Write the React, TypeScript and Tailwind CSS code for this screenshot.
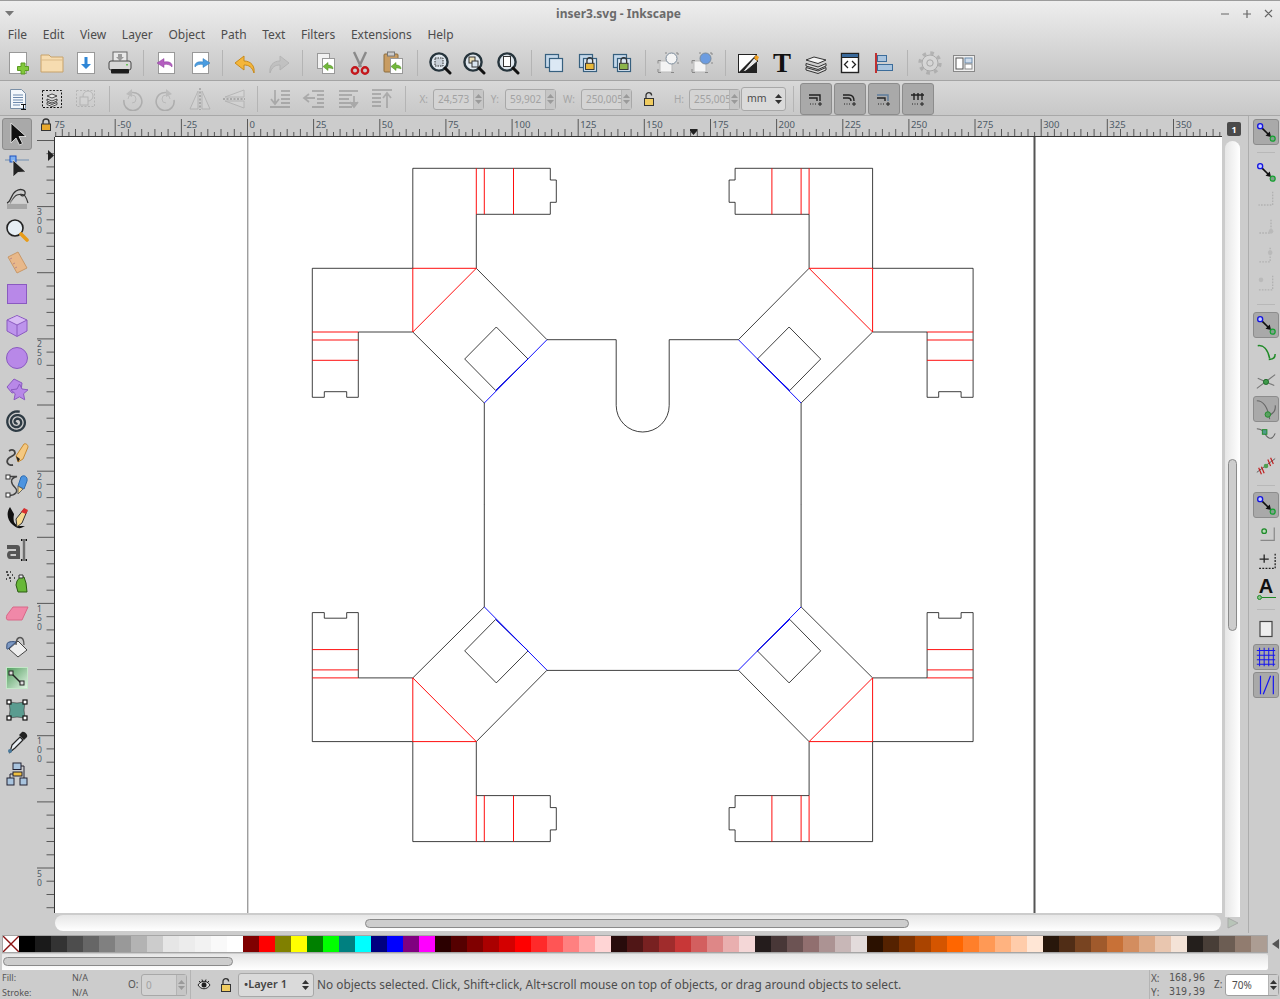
import type { ReactNode } from "react";

const ui = "font-['Noto_Sans','Open_Sans',sans-serif]";

// ---------- small shared bits ----------
function I({ children, s = 24, dim = false }: { children: ReactNode; s?: number; dim?: boolean }) {
  return (
    <svg width={s} height={s} viewBox="0 0 24 24" className={dim ? "opacity-30 grayscale" : ""}>
      {children}
    </svg>
  );
}

function Btn({ children }: { children: ReactNode }) {
  return <div className="flex h-[32px] w-[34px] shrink-0 items-center justify-center">{children}</div>;
}

function Sep({ w = "w-[12px]" }: { w?: string }) {
  return (
    <div className={`flex h-[26px] shrink-0 justify-center ${w}`}>
      <div className="h-full w-px bg-[#b4b4b4]" />
    </div>
  );
}

function UpDown({ c = "#9a9a9a" }: { c?: string }) {
  return (
    <svg width="9" height="14" viewBox="0 0 9 14">
      <path d="M4.500 2 8 6H1zM4.500 12 1 8h7z" fill={c} />
    </svg>
  );
}

function Spin({ v }: { v: string }) {
  return (
    <div className="flex h-[21px] w-[51px] shrink-0 rounded-[3px] border border-[#a8a8a8] bg-[#d4d4d4]">
      <span className="w-[39px] overflow-hidden whitespace-nowrap pl-[4px] text-[10px] leading-[19px] text-[#a2a2a2]">{v}</span>
      <span className="flex flex-1 items-center justify-center border-l border-[#b4b4b4] bg-[#c6c6c6]">
        <UpDown />
      </span>
    </div>
  );
}

function Lbl({ t, w, pr }: { t: string; w: string; pr: string }) {
  return <span className={`shrink-0 text-right text-[10px] text-[#a6a6a6] ${w} ${pr}`}>{t}</span>;
}

// ---------- main toolbar icons ----------
const Doc = ({ x = 5, y = 2, w = 15, h = 20, f = "#fff" }: { x?: number; y?: number; w?: number; h?: number; f?: string }) => (
  <rect x={x + 0.5} y={y + 0.5} width={w} height={h} fill={f} stroke="#999" />
);

const Lens = ({ children }: { children?: ReactNode }) => (
  <I>
    <circle cx="11" cy="11" r="8.600" fill="#dfe7ee" stroke="#26343c" strokeWidth="2.400" />
    {children}
    <path d="M17 17l5 5" stroke="#111" strokeWidth="3" strokeLinecap="round" />
  </I>
);

const Padlock = ({ c = "#e8b83a" }: { c?: string }) => (
  <g>
    <path d="M11 14v-3a3 3 0 0 1 6 0v3" fill="none" stroke="#333" strokeWidth="1.400" />
    <rect x="9.500" y="14" width="9" height="6.500" fill={c} stroke="#333" />
  </g>
);

const NewIco = () => (
  <I>
    <Doc x={3} y={1} w={17} h={21} />
    <path d="M15 12h4v3.500h3.500v4H19V23h-4v-3.500h-3.500v-4H15z" fill="#82c83c" stroke="#5b9a22" />
  </I>
);
const OpenIco = () => (
  <I>
    <path d="M1 4h8l2 2h12v15H1z" fill="#f6dcb0" stroke="#c7a26a" />
    <path d="M1 9h22" stroke="#d9b988" />
  </I>
);
const SaveIco = () => (
  <I>
    <Doc x={3} y={1} w={17} h={21} />
    <path d="M10.500 6h3v7h3.500l-5 5-5-5h3.500z" fill="#2f86d6" />
  </I>
);
const PrintIco = () => (
  <I>
    <rect x="5" y="1" width="14" height="11" fill="#e8e8e8" stroke="#666" />
    <path d="M10 3h4v3h2l-4 4-4-4h2z" fill="#9a9a9a" />
    <rect x="1" y="10" width="22" height="9" rx="2" fill="#d8d8d8" stroke="#444" />
    <rect x="3" y="18" width="18" height="4.500" rx="1" fill="#1d1d1d" />
    <rect x="18" y="13" width="2" height="1.500" fill="#6ac25a" />
  </I>
);
const ImportIco = () => (
  <I>
    <Doc x={4} y={1} w={16} h={21} />
    <path d="M18 16c1-4-3-6-8-5V7.500L3 12l7 4.500V13.500c3-.5 6 0 8 2.500z" fill="#b45ec0" stroke="#8a3c98" strokeWidth=".5" />
  </I>
);
const ExportIco = () => (
  <I>
    <Doc x={4} y={1} w={16} h={21} />
    <path d="M7 16c-1-4 3-6 8-5V7.500L22 12l-7 4.500V13.500c-3-.5-6 0-8 2.500z" fill="#4a9ce0" stroke="#2f78b8" strokeWidth=".5" />
  </I>
);
const UndoIco = () => (
  <I>
    <path d="M21 22c1-7-3-12-10-12V5L2 12l9 7v-5c5 0 8 2 10 8z" fill="#f4b63a" stroke="#c88a1c" />
  </I>
);
const RedoIco = () => (
  <I dim>
    <path d="M3 22c-1-7 3-12 10-12V5l9 7-9 7v-5c-5 0-8 2-10 8z" fill="#9aa89a" stroke="#777" />
  </I>
);
const GreenArrow = () => (
  <path d="M19 18c0-3-2-4-5-4v-2.500L9 15.500l5 4V17c2 0 4 0 5 1z" fill="#72b83c" stroke="#4f8a22" strokeWidth=".5" />
);
const CopyIco = () => (
  <I>
    <Doc x={3} y={2} w={12} h={15} f="#f2f2f2" />
    <Doc x={8} y={7} w={12} h={15} />
    <GreenArrow />
  </I>
);
const CutIco = () => (
  <I>
    <path d="M6 1l7 15M18 1l-7 15" stroke="#8a8a8a" strokeWidth="2.400" />
    <circle cx="7" cy="19.500" r="3.200" fill="none" stroke="#c4171c" strokeWidth="2.400" />
    <circle cx="17" cy="19.500" r="3.200" fill="none" stroke="#c4171c" strokeWidth="2.400" />
  </I>
);
const PasteIco = () => (
  <I>
    <rect x="2" y="3" width="14" height="18" rx="1" fill="#c89c62" stroke="#8c6c3c" />
    <rect x="5.500" y="1" width="7" height="4" fill="#ccc" stroke="#777" />
    <Doc x={8} y={7} w={12} h={15} />
    <GreenArrow />
  </I>
);
const DupIco = () => (
  <I>
    <rect x="3.500" y="3.500" width="13" height="13" fill="#c4d8ea" stroke="#37607f" strokeWidth="1.200" />
    <rect x="7.500" y="7.500" width="13" height="13" fill="#dce8f4" stroke="#37607f" strokeWidth="1.200" />
  </I>
);
const CloneIco = ({ c }: { c: string }) => (
  <I>
    <rect x="3.500" y="3.500" width="13" height="13" fill="#c4d8ea" stroke="#37607f" strokeWidth="1.200" />
    <rect x="7.500" y="7.500" width="13" height="13" fill="#dce8f4" stroke="#37607f" strokeWidth="1.200" />
    <g transform="translate(.5 -1) scale(.95)">
      <Padlock c={c} />
    </g>
  </I>
);
const GroupIco = ({ c }: { c: string }) => (
  <I>
    <rect x="4" y="10" width="12" height="11" fill="#f4f4f4" stroke="#bbb" />
    <path d="M2 9.500h3M15 21.500h3M2 21.500h3M2 9.500v3M2 18v3" stroke="#888" />
    <circle cx="15.500" cy="7.500" r="5.500" fill={c} stroke="#7a8a9a" />
    <path d="M9 2h2M20 2h2M22 2v2M22 11v2" stroke="#888" />
  </I>
);
const FillIco = () => (
  <I>
    <rect x="2" y="3" width="19" height="19" fill="#222" />
    <path d="M3 21V4h17z" fill="#fff" />
    <path d="M8 19l10-12 4 3-12 10-3 1z" fill="#e8e8e8" stroke="#222" />
    <path d="M18 7l2-3 3 2-2 4z" fill="#f0a020" />
  </I>
);
const TextIco = () => <span className="font-['Liberation_Serif',serif] text-[27px] font-bold leading-[24px] text-[#111]">T</span>;
const LayersIco = () => (
  <I>
    <path d="M2 9l8-3 12 3-8 3.500z" fill="#f4f4f4" stroke="#333" />
    <path d="M2 12.500l12 3.500 8-3.500v2.500l-8 3.500-12-3.500zM2 16.500l12 3.500 8-3.500v2.500l-8 3.500-12-3.500z" fill="#ddd" stroke="#333" />
  </I>
);
const XmlIco = () => (
  <I>
    <rect x="3.500" y="2.500" width="17" height="19" fill="#fff" stroke="#222" strokeWidth="1.400" />
    <rect x="3.500" y="2.500" width="17" height="4" fill="#3a6a9c" stroke="#222" />
    <path d="M10 10l-3.500 3.500L10 17M14 10l3.500 3.500L14 17" fill="none" stroke="#222" strokeWidth="1.300" />
  </I>
);
const AlignIco = () => (
  <I>
    <path d="M4 2v20" stroke="#c03030" strokeWidth="2" />
    <rect x="5.500" y="4.500" width="9" height="6" fill="#a9c4de" stroke="#3b6c9a" />
    <rect x="5.500" y="13.500" width="15" height="6" fill="#a9c4de" stroke="#3b6c9a" />
  </I>
);
const GearIco = () => (
  <I>
    <g opacity=".55">
      <circle cx="12" cy="12" r="8" fill="#dcdcdc" stroke="#888" strokeWidth="1" />
      <circle cx="12" cy="12" r="10" fill="none" stroke="#999" strokeWidth="3.400" strokeDasharray="3.600 4.250" />
      <circle cx="12" cy="12" r="3.200" fill="#ddd" stroke="#888" />
    </g>
  </I>
);
const DocPropIco = () => (
  <I>
    <rect x="1.500" y="4.500" width="21" height="16" fill="#eee" stroke="#888" />
    <rect x="4" y="7" width="7" height="11" fill="#fff" stroke="#555" />
    <rect x="13" y="7" width="7" height="5" fill="#cfdceb" stroke="#6a8aaa" />
    <rect x="13" y="13" width="7" height="5" fill="#fff" stroke="#888" />
  </I>
);

// ---------- second toolbar ----------
const DocPage = () => (
  <I>
    <path d="M4.500 2.500h11l4 4v15h-15z" fill="#f4f8fc" stroke="#7a8fa6" />
    <path d="M7 8h10M7 10.500h10M7 13h10M7 15.500h10M7 18h7" stroke="#6d89ad" />
    <path d="M15 17.500h5M15 22.500h5M17.500 17.500v5" stroke="#111" strokeWidth="1" />
  </I>
);
const SelAll = () => (
  <I>
    <rect x="2.500" y="3.500" width="19" height="17" fill="#d4d4d4" stroke="#111" strokeDasharray="2 1.500" />
    <path d="M7 9l5-2 5 2-5 2zM7 12l5 2 5-2v2l-5 2-5-2zM7 15.500l5 2 5-2v2l-5 2-5-2z" fill="#eee" stroke="#222" strokeWidth=".8" />
  </I>
);
const SelIn = () => (
  <I dim>
    <rect x="2.500" y="3.500" width="18" height="16" fill="none" stroke="#777" strokeDasharray="2 1.500" />
    <circle cx="14" cy="9" r="5" fill="#ddd" stroke="#777" />
    <rect x="6" y="10" width="8" height="8" fill="#ddd" stroke="#777" />
  </I>
);
const RotL = () => (
  <I dim>
    <path d="M8 7a9 9 0 1 1-4 6" fill="none" stroke="#666" strokeWidth="1.600" />
    <path d="M12 2l-6 5 6 3z" fill="#888" />
    <path d="M12 16a4 4 0 1 0-4-4" fill="none" stroke="#888" />
  </I>
);
const RotR = () => (
  <I dim>
    <path d="M16 7a9 9 0 1 0 4 6" fill="none" stroke="#666" strokeWidth="1.600" />
    <path d="M12 2l6 5-6 3z" fill="#888" />
    <path d="M12 16a4 4 0 1 1 4-4" fill="none" stroke="#888" />
  </I>
);
const FlipH = () => (
  <I dim>
    <path d="M10 4L2 22h8zM14 4l8 18h-8z" fill="#ddd" stroke="#777" />
    <path d="M12 1v22" stroke="#555" strokeDasharray="2 1.500" strokeWidth="2" />
  </I>
);
const FlipV = () => (
  <I dim>
    <path d="M22 3L3 10h19zM22 21L3 14h19z" fill="#ddd" stroke="#777" />
    <path d="M1 12h22" stroke="#555" strokeDasharray="2 1.500" strokeWidth="2" />
  </I>
);
const Stack = ({ d }: { d: string }) => (
  <I dim>
    <path d={d} fill="none" stroke="#555" strokeWidth="1.800" />
  </I>
);

// ---------- snap-mode toolbars etc. ----------
const TogIco = ({ i }: { i: number }) => (
  <svg width="18" height="18" viewBox="0 0 18 18">
    <g fill="none" stroke="#222" strokeWidth="1.400">
      {i === 0 && <path d="M2 5h11v6M2 8h8v3" />}
      {i === 1 && <path d="M2 5h6c3 0 5 2 5 6M2 8h5c2 0 3 1 3 3" />}
      {i === 2 && <path d="M2 5h11v6" stroke="#5d7c9c" />}
      {i === 2 && <path d="M2 8h8v3" />}
      {i === 3 && <path d="M2 5h13M5 3v7M9 3v7M13 3v7" />}
    </g>
    <path d="M3 14h1M5.500 14h1M8 14h1M11 14h4M13 12v4" stroke="#222" />
  </svg>
);

const NodeLink = () => (
  <svg width="20" height="20" viewBox="0 0 24 24">
    <path d="M7 7l8 8" stroke="#111" strokeWidth="2" />
    <path d="M18 18l-6.500-1.500 5-5z" fill="#111" />
    <circle cx="5" cy="5" r="3" fill="#c4ccff" stroke="#1414e0" strokeWidth="1.600" />
    <circle cx="20" cy="20" r="3" fill="#7fa08a" stroke="#15a030" strokeWidth="1.500" />
  </svg>
);

function Snap({ children, on = false }: { children?: ReactNode; on?: boolean }) {
  return (
    <div className="flex h-[28px] items-center justify-center">
      <div className={on ? "flex h-[26px] w-[26px] items-center justify-center rounded-[3px] border border-[#8c8c8c] bg-[#a9a9a9]" : "flex h-[26px] w-[26px] items-center justify-center"}>
        {children}
      </div>
    </div>
  );
}
const SnapSep = ({ h }: { h: string }) => (
  <div className={`flex items-center justify-center ${h}`}>
    <div className="h-px w-[18px] bg-[#b8b8b8]" />
  </div>
);

const Dim = ({ d, cx, cy }: { d: string; cx?: number; cy?: number }) => (
  <svg width="20" height="20" viewBox="0 0 24 24" className="opacity-50">
    <path d={d} fill="none" stroke="#999" strokeWidth="1.600" strokeDasharray="2 1.500" />
    {cx !== undefined && <circle cx={cx} cy={cy} r="2.800" fill="#aaa" />}
  </svg>
);

const SmallS = ({ children }: { children: ReactNode }) => (
  <svg width="22" height="22" viewBox="0 0 24 24">
    {children}
  </svg>
);

// spiral tool: points along a growing radius
function spiralPath() {
  let d = "";
  for (let i = 0; i <= 70; i++) {
    const a = (i / 70) * Math.PI * 5.2 + 1.2;
    const r = 1.2 + (i / 70) * 9.6;
    const x = 12 + r * Math.cos(a);
    const y = 12 + r * Math.sin(a);
    d += `${i === 0 ? "M" : "L"}${x.toFixed(2)} ${y.toFixed(2)}`;
  }
  return d;
}

// ---------- toolbox ----------
const tools: ReactNode[] = [
  <I key="sel"><path d="M6 1v20l5-5 3.500 7 3-1.500-3.500-7h7z" fill="#111" stroke="#eee" strokeWidth=".8" /></I>,
  <I key="node"><path d="M0 6h24" stroke="#8aa0b8" strokeWidth="1.400" /><rect x="5" y="2" width="6" height="6" fill="#7fb0f0" stroke="#1a50c0" /><path d="M8 6v17l5-4.500 8-.5z" fill="#222" stroke="#ddd" strokeWidth=".8" /></I>,
  <I key="tweak"><path d="M2 17c4-1 4-9 9-12s10-1 9 3c-1 3-5 2-4 0" fill="none" stroke="#333" strokeWidth="1.300" /><path d="M5 17c2-2 4-7 7-8s6-2 8 1 3 7 3 7" fill="none" stroke="#333" strokeWidth="1.100" /><path d="M2 23v-5h20v5z" fill="#a6a6a6" /><path d="M3 17c3-1 6-6 9-7s6 0 9 7z" fill="#d4d4d4" opacity=".6" /></I>,
  <I key="zoom"><circle cx="10" cy="10" r="8" fill="#e6eef4" stroke="#222" strokeWidth="1.600" /><path d="M16 16l6 6" stroke="#e89c18" strokeWidth="3.600" strokeLinecap="round" /></I>,
  <I key="meas"><path d="M3 7l10-5 9 16-10 5z" fill="#e8b88a" stroke="#c89868" /><path d="M5 9l2-1M8 14l2-1M10 18l2-1" stroke="#b88" /></I>,
  <I key="rect"><rect x="2.500" y="2.500" width="19" height="19" fill="#b888e8" stroke="#8a5ac0" /></I>,
  <I key="box"><path d="M12 1.500l10 4.500v11l-10 5.500-10-5.500V6z" fill="#bd94ec" stroke="#8a5ac0" /><path d="M2.500 6.500L12 2l9.500 4.500L12 11z" fill="#d8bcf4" /><path d="M2 6l10 5 10-5M12 11v11" fill="none" stroke="#8a5ac0" /></I>,
  <I key="circ"><circle cx="12" cy="12" r="10.500" fill="#b888e8" stroke="#8a5ac0" /></I>,
  <I key="star"><path d="M9 1l8 4 -1 8-9 2-5-6z" fill="#b888e8" stroke="#8a5ac0" /><path d="M14.500 6l2.500 5 6 .8-4.500 4 1.200 6-5.200-3-5.500 3 1.200-6L6 11.800l6-.8z" fill="#b888e8" stroke="#8a5ac0" /></I>,
  <I key="spiral"><path d={spiralPath()} fill="none" stroke="#2e3b44" strokeWidth="2.300" /></I>,
  <I key="pencil"><path d="M13 20l-2-6 8-12c2-1 4 1 4 3l-5 12z" fill="#f4c880" stroke="#c88a30" /><path d="M13 20l-2-6 4 3z" fill="#222" /><path d="M8 23c-5 1-7-3-5-6s7-3 7-6-3-4-6-2" fill="none" stroke="#444" strokeWidth="1.800" /></I>,
  <I key="pen"><path d="M3 2.500h9c-8 2-6 7-2 11s0 8-6 8" fill="none" stroke="#444" strokeWidth="1.400" /><rect x="1" y="1" width="4" height="4" fill="#fff" stroke="#333" /><rect x="1" y="19" width="4" height="4" fill="#fff" stroke="#333" /><path d="M16 3c3-3 7 0 6 4l-3 8-6-3z" fill="#4c94e0" stroke="#2a6ab0" /><path d="M13 12l5 3-5 5z" fill="#f4d890" stroke="#666" /></I>,
  <I key="calli"><path d="M5 1c-4 6-3 13 3 18s8 3 12 1c-4 0-8 1-11-4-1-4 0-7 0-8z" fill="#111" /><path d="M11 13l8-10 3 2-5 12-5 4z" fill="#f4d890" stroke="#333" /><path d="M16 6l3-4 4 2-2 4z" fill="#d83030" /></I>,
  <I key="text"><path d="M2 7h10c2 0 3 1 3 3v11H5c-2 0-3-2-3-4s1-4 3-4h6v-2H2zM5.500 16v2h5.500v-2z" fill="#555" /><path d="M16 2h6M19 2v20M16 22h6" fill="none" stroke="#111" strokeWidth="2.200" /><path d="M17 2h4M19 3v18M17 22h4" fill="none" stroke="#fff" strokeWidth=".8" /></I>,
  <I key="spray"><path d="M12 11l3-4h4l2 6 1 9h-9l-2-7z" fill="#68b838" stroke="#2a5a12" /><path d="M14 5h4v3h-4z" fill="#eee" stroke="#333" /><path d="M1 2h2M5 2h1M2 5h2M7 5h1M4 8h2M9 8h1M1 9h1M5 11h1" stroke="#222" strokeWidth="1.500" /></I>,
  <I key="eraser"><path d="M8 5h15l-6 13H3C1 18 1 15 2 13z" fill="#f088a8" stroke="#d86888" /></I>,
  <I key="bucket"><path d="M13 7l9 9-9 7-9-8z" fill="#eee" stroke="#444" /><path d="M11 11c0-10 8-10 8 0" fill="none" stroke="#555" strokeWidth="1.300" /><path d="M2 10c0-2 5-3 9-2L3 15c-2 1-1-3-1-5z" fill="#7e9ac4" stroke="#35507c" /></I>,
  <I key="grad"><defs><linearGradient id="gr" x1="0" y1="0" x2="1" y2="1"><stop offset="0" stopColor="#4f9c5c" /><stop offset="1" stopColor="#e4f4e6" /></linearGradient></defs><rect x="1.500" y="1.500" width="21" height="21" fill="url(#gr)" stroke="#c4e8c8" /><path d="M7 8l9 9" stroke="#222" strokeWidth="1.400" /><rect x="4" y="5" width="4" height="4" fill="#ddd" stroke="#222" /><rect x="15" y="15" width="4" height="4" fill="#ddd" stroke="#222" /></I>,
  <I key="mesh"><path d="M4 4q8 2 16 0-2 8 0 16-8-2-16 0 2-8 0-16z" fill="#5a9c90" stroke="#333" strokeWidth=".6" /><g fill="#fff" stroke="#111" strokeWidth="1.200"><rect x="2" y="2" width="4" height="4" /><rect x="18" y="2" width="4" height="4" /><rect x="2" y="18" width="4" height="4" /><rect x="18" y="18" width="4" height="4" /></g></I>,
  <I key="drop"><path d="M7 15l8-8 3 3-8 8-5 4z" fill="#e8eef4" stroke="#222" strokeWidth="1.200" /><path d="M14 5l5 5 3-3c1-2-2-6-5-5z" fill="#222" /><circle cx="5" cy="21" r="2" fill="#4a7a9c" /></I>,
  <I key="conn"><rect x="8" y="1" width="8" height="6.500" fill="#a9c4de" stroke="#223" /><rect x="2" y="16" width="7" height="7" fill="#a9c4de" stroke="#223" /><rect x="15" y="16" width="7" height="7" fill="#a9c4de" stroke="#223" /><rect x="8" y="10" width="9" height="4" fill="#f0c040" stroke="#223" /><path d="M5 16v-4h3M16 4h3v12" fill="none" stroke="#223" /></I>,
];

// ---------- palette ----------
const palette = "000000 1a1a1a 333333 4d4d4d 666666 808080 999999 b3b3b3 cccccc e6e6e6 ececec f2f2f2 f9f9f9 ffffff 800000 ff0000 808000 ffff00 008000 00ff00 008080 00ffff 000080 0000ff 800080 ff00ff 2b0000 550000 800000 aa0000 d40000 ff0000 ff2a2a ff5555 ff8080 ffaaaa ffd5d5 280b0b 501616 782121 a02c2c c83737 d35f5f de8787 e9afaf f4d7d7 241c1c 483737 6c5353 916f6f ac9393 c8b7b7 e3dbdb 2b1100 552200 803300 aa4400 d45500 ff6600 ff7f2a ff9955 ffb380 ffccaa ffe6d5 28170b 502d16 784421 a05a2c c87137 d38d5f deaa87 e9c6af f4e3d7 241f1c 483e37 6c5d53 917c6f ac9d93".split(" ");

// ---------- rulers ----------
function HRuler() {
  const ticks = [];
  for (let k = -30; k <= 148; k++) {
    const x = 248 + k * 6.614 - 0.5;
    const top = k % 10 === 0 ? 119 : k % 2 === 0 ? 129 : 132;
    ticks.push(<path key={k} d={`M${x.toFixed(1)} ${top}V136`} stroke="#3a3a3a" strokeWidth=".8" />);
  }
  const labels = [];
  for (let v = -75; v <= 350; v += 25) {
    labels.push(
      <text key={v} x={248 + (v / 25) * 66.14 + 1.5} y="128" fontSize="9.500" fill="#4d5a66" fontFamily="Noto Sans, sans-serif">
        {v}
      </text>,
    );
  }
  return (
    <svg width="1167" height="19" viewBox="55 118 1167 19" className="block">
      {ticks}
      {labels}
      <path d="M55 136.500H1222" stroke="#333" />
      <path d="M690 129h7v2l-3.500 4-3.500-4z" fill="#222" />
    </svg>
  );
}

function VRuler() {
  const ticks = [];
  for (let k = -55; k <= 5; k++) {
    const y = 868 + k * 13.228;
    const major = k % 5 === 0;
    ticks.push(<path key={k} d={`M${major ? 37 : 46.500} ${y.toFixed(1)}H54`} stroke="#3a3a3a" strokeWidth=".8" />);
  }
  const labels: ReactNode[] = [];
  for (const v of [300, 250, 200, 150, 100, 50]) {
    const y = 868 + ((50 - v) / 25) * 66.14;
    String(v).split("").forEach((d, i) => {
      labels.push(
        <text key={`${v}-${i}`} x="39.500" y={y + 8.500 + i * 9} textAnchor="middle" fontSize="8.500" fill="#4d5a66" fontFamily="Noto Sans, sans-serif">
          {d}
        </text>,
      );
    });
  }
  return (
    <svg width="18" height="776" viewBox="37 137 18 776" className="block">
      {ticks}
      {labels}
      <path d="M54.500 137V913" stroke="#333" />
      <path d="M48 150l6 5.500-6 5.500z" fill="#222" />
    </svg>
  );
}

// ---------- the drawing on the canvas ----------
function Quarter() {
  return (
    <g fill="none" strokeWidth=".75">
      <path
        stroke="#000"
        d="M476.300 268.300V214.300H550.300V202.300H556.300V180H550.300V168.300H412.800V268.300H312.300V397.300H324.300V391.700H346.700V397.300H358.300V332H412.800L484.300 403V505M476.300 268.300L547 339.700"
      />
      <path stroke="#000" d="M496.300 327L528 359 495.700 390.500 464.700 359z" />
      <path stroke="#f00" strokeWidth=".95" d="M476.300 168.300V214.300M484.300 168.300V214.300M513.500 168.300V214.300M312.300 332H358.300M312.300 340H358.300M312.300 360.300H358.300M412.800 268.300H476.300M412.800 268.300V332M476.300 268.300L412.800 332" />
      <path stroke="#00f" strokeWidth=".95" d="M547 339.700L484.300 403M528 359L495.700 390.500" />
    </g>
  );
}

function Drawing() {
  return (
    <svg width="1167" height="776" viewBox="55 137 1167 776" className="block bg-white">
      <path d="M247.800 137V913" stroke="#666" strokeWidth=".9" />
      <path d="M1034.500 137V913" stroke="#555" strokeWidth="2" />
      <Quarter />
      <g transform="translate(1285.400 0) scale(-1 1)">
        <Quarter />
      </g>
      <g transform="translate(0 1009.900) scale(1 -1)">
        <Quarter />
      </g>
      <g transform="translate(1285.400 1009.900) scale(-1 -1)">
        <Quarter />
      </g>
      {/* the top edge has the slot in it, the bottom one is straight */}
      <path d="M547 339.700H616.200V405.500A26.500 26.500 0 0 0 669.200 405.500V339.700H738.400" stroke="#000" strokeWidth=".75" fill="none" />
      <path d="M547 670.400H738.400" stroke="#000" strokeWidth=".75" fill="none" />
    </svg>
  );
}

const menus = ["File", "Edit", "View", "Layer", "Object", "Path", "Text", "Filters", "Extensions", "Help"];

export default function App() {
  return (
    <div className={`flex h-[999px] w-[1280px] flex-col overflow-hidden bg-[#cccccc] text-[#4c4c4c] ${ui}`}>
      {/* title, menu and command bar share one gradient */}
      <div className="h-[81px] shrink-0 border-t border-b border-t-[#9c9c9c] border-b-[#a4a4a4] bg-linear-to-b from-[#eeeeee] to-[#c6c6c6]">
        <div className="flex h-[23px] items-center justify-between pl-[5px] pr-[7px] pt-[2px]">
          <svg width="11" height="6" viewBox="0 0 11 6">
            <path d="M0 0h9L4.500 5z" fill="#777" />
          </svg>
          <span className="text-[12px] font-bold text-[#6b6b6b]">inser3.svg - Inkscape</span>
          <svg width="52" height="10" viewBox="0 0 52 10">
            <path d="M0 5h8M22 5h8M26 1v8M44 1l7 7M51 1l-7 7" stroke="#666" strokeWidth="1.200" />
          </svg>
        </div>
        <div className="flex h-[22px] items-center text-[12px]">
          {menus.map((m) => (
            <span key={m} className="px-[7.850px]">
              {m}
            </span>
          ))}
        </div>
        <div className="flex h-[34px] items-center pl-[1px]">
          <Btn><NewIco /></Btn>
          <Btn><OpenIco /></Btn>
          <Btn><SaveIco /></Btn>
          <Btn><PrintIco /></Btn>
          <Sep />
          <Btn><ImportIco /></Btn>
          <Btn><ExportIco /></Btn>
          <Sep w="w-[11px]" />
          <Btn><UndoIco /></Btn>
          <Btn><RedoIco /></Btn>
          <Sep w="w-[13px]" />
          <Btn><CopyIco /></Btn>
          <Btn><CutIco /></Btn>
          <Btn><PasteIco /></Btn>
          <Sep />
          <Btn><Lens><rect x="7" y="7" width="8" height="8" fill="#c8d0d8" stroke="#333" strokeDasharray="1.500 1" /></Lens></Btn>
          <Btn><Lens><rect x="7" y="6" width="6" height="6" fill="#ece0b8" stroke="#333" /><rect x="10" y="10" width="6" height="6" fill="#d8e4f0" stroke="#333" /></Lens></Btn>
          <Btn><Lens><rect x="7.500" y="5.500" width="7" height="10" fill="#fff" stroke="#333" /></Lens></Btn>
          <Sep />
          <Btn><DupIco /></Btn>
          <Btn><CloneIco c="#e8b83a" /></Btn>
          <Btn><CloneIco c="#8cb44a" /></Btn>
          <Sep />
          <Btn><GroupIco c="#f4f4f4" /></Btn>
          <Btn><GroupIco c="#6c9ce0" /></Btn>
          <Sep />
          <Btn><FillIco /></Btn>
          <Btn><TextIco /></Btn>
          <Btn><LayersIco /></Btn>
          <Btn><XmlIco /></Btn>
          <Btn><AlignIco /></Btn>
          <Sep />
          <Btn><GearIco /></Btn>
          <Btn><DocPropIco /></Btn>
        </div>
      </div>

      {/* selector tool controls */}
      <div className="flex h-[35px] shrink-0 items-center border-b border-[#a8a8a8] bg-linear-to-b from-[#d8d8d8] to-[#c8c8c8] pl-[1px] pt-[2px]">
        <Btn><DocPage /></Btn>
        <Btn><SelAll /></Btn>
        <Btn><SelIn /></Btn>
        <Sep />
        <Btn><RotL /></Btn>
        <Btn><RotR /></Btn>
        <Btn><FlipH /></Btn>
        <Btn><FlipV /></Btn>
        <Sep />
        <Btn><Stack d="M7 3v13M3 12l4 5 4-5M2 20h20M13 4h9M13 8h9M13 12h9M13 16h9" /></Btn>
        <Btn><Stack d="M3 11h10M7 7l-5 4 5 4M10 4h12M15 8h7M15 12h7M15 16h7M10 20h12" /></Btn>
        <Btn><Stack d="M3 4h19M3 8h13M3 12h10M3 16h19M3 20h13M18 9v10M14 15l4 5 4-5" /></Btn>
        <Btn><Stack d="M2 3h20M17 7v14M13 11l4-5 4 5M2 7h9M2 11h9M2 15h9M2 19h9" /></Btn>
        <Sep />
        <Lbl t="X:" w="w-[22px]" pr="pr-[5px]" />
        <Spin v="24,573" />
        <Lbl t="Y:" w="w-[21px]" pr="pr-[6px]" />
        <Spin v="59,902" />
        <Lbl t="W:" w="w-[25px]" pr="pr-[6px]" />
        <Spin v="250,005" />
        <div className="flex w-[34px] shrink-0 justify-center">
          <svg width="12" height="14" viewBox="0 0 12 14">
            <path d="M3 6V3.500a2.800 2.800 0 0 1 5.600 0" fill="none" stroke="#333" strokeWidth="1.300" />
            <rect x="1.500" y="6.500" width="9" height="7" fill="#f0cc60" stroke="#333" />
          </svg>
        </div>
        <Lbl t="H:" w="w-[23px]" pr="pr-[5px]" />
        <Spin v="255,005" />
        <div className="ml-px flex h-[24px] w-[45px] shrink-0 items-center justify-between rounded-[3px] border border-[#a8a8a8] bg-[#dadada] pl-[5px] pr-[2px] text-[10.500px]">
          <span>mm</span>
          <UpDown c="#333" />
        </div>
        <div className="flex w-[14px] shrink-0 justify-center">
          <div className="h-[26px] w-px bg-[#b4b4b4]" />
        </div>
        <div className="flex gap-[2px]">
          {[0, 1, 2, 3].map((i) => (
            <div key={i} className="flex h-[32px] w-[32px] items-center justify-center rounded-[3px] border border-[#8c8c8c] bg-[#a9a9a9]">
              <TogIco i={i} />
            </div>
          ))}
        </div>
      </div>

      {/* toolbox, canvas with rulers and scrollbars, snap bar */}
      <div className="flex h-[817px] shrink-0">
        <div className="flex w-[37px] shrink-0 flex-col pt-[2px]">
          {tools.map((t, i) => (
            <div key={i} className={i === 0 ? "ml-[2px] flex h-[32px] w-[30px] items-center justify-center rounded-[3px] border border-[#8c8c8c] bg-[#a9a9a9]" : "ml-[2px] flex h-[32px] w-[30px] items-center justify-center"}>
              {t}
            </div>
          ))}
        </div>

        <div className="flex w-[1211px] flex-col">
          <div className="flex h-[21px] items-end">
            <div className="flex h-[19px] w-[18px] justify-center pr-[1px]">
              <svg width="12" height="13" viewBox="0 0 12 13">
                <path d="M3 6V4a3 3 0 0 1 6 0v2" fill="none" stroke="#333" strokeWidth="1.400" />
                <rect x="1.500" y="6" width="9" height="6.500" fill="#e8a82c" stroke="#333" />
              </svg>
            </div>
            <HRuler />
            <div className="mb-[1px] ml-[5px] flex h-[14px] w-[14px] items-center justify-center rounded-[2px] bg-[#4a4a4a] text-[9px] font-bold leading-none text-white">1</div>
          </div>
          <div className="flex h-[776px]">
            <VRuler />
            <Drawing />
            <div className="flex w-[26px] pl-[3px] pt-[4px]">
              <div className="flex h-[776px] w-[15px] flex-col rounded-t-full bg-linear-to-r from-[#e6e6e6] to-white pl-[3px] pt-[318px]">
                <div className="h-[172px] w-[9px] rounded-full border border-[#8a8a8a] bg-[#cdcdcd]" />
              </div>
            </div>
          </div>
          <div className="flex h-[20px] items-center">
            <div className="w-[18px]" />
            <div className="flex h-[16px] w-[1166px] items-center rounded-full bg-linear-to-b from-[#e6e6e6] to-white pl-[310px]">
              <div className="h-[9px] w-[544px] rounded-full border border-[#8a8a8a] bg-[#cdcdcd]" />
            </div>
            <svg width="14" height="12" viewBox="0 0 14 12" className="ml-[5px]">
              <path d="M2 1l10 5-10 5z" fill="#b8c4b8" stroke="#a8aaa8" />
            </svg>
          </div>
        </div>

        <div className="flex w-[32px] shrink-0 flex-col border-l border-[#adadad] pl-[3px] pt-[2px]">
          <Snap on><NodeLink /></Snap>
          <SnapSep h="h-[12px]" />
          <Snap><NodeLink /></Snap>
          <Snap><Dim d="M20 2v16H3" /></Snap>
          <Snap><Dim d="M18 2v16H3" cx={18} cy={16} /></Snap>
          <Snap><Dim d="M17 2v17H3" cx={17} cy={8} /></Snap>
          <Snap><Dim d="M20 2v17H3" cx={6} cy={7} /></Snap>
          <SnapSep h="h-[13px]" />
          <Snap on><NodeLink /></Snap>
          <Snap><SmallS><path d="M3 4c6-1 11 4 13 14" fill="none" stroke="#1e8a26" strokeWidth="1.600" /><path d="M22 13c0 4-2 6-7 6" fill="none" stroke="#1e8a26" strokeWidth="1.600" /></SmallS></Snap>
          <Snap><SmallS><path d="M2 20L22 5M3 9l18 8" stroke="#777" strokeWidth="1.200" /><circle cx="12" cy="13" r="2.800" fill="#3f9a4a" stroke="#1c6a28" /></SmallS></Snap>
          <Snap on><SmallS><path d="M2 3c8 0 12 8 14 20M22 8c1 6-3 10-9 12" fill="none" stroke="#666" strokeWidth="1.200" /><circle cx="14" cy="18" r="3" fill="#5aa060" stroke="#1c8a28" /></SmallS></Snap>
          <Snap><SmallS><path d="M2 3c4 0 6 2 8 3M10 6c2 6 8 12 12 2" fill="none" stroke="#666" strokeWidth="1.200" /><rect x="8" y="4" width="5" height="5" fill="#4f9a8a" stroke="#1c8a28" /></SmallS></Snap>
          <Snap><SmallS><path d="M2 20L22 5" stroke="#555" /><path d="M4 15l3 7M7 14l3 7M14 6l3 7M17 4l3 7" stroke="#c02020" strokeWidth="1.300" /><circle cx="12" cy="13" r="2.500" fill="#4fa050" /></SmallS></Snap>
          <SnapSep h="h-[12px]" />
          <Snap on><NodeLink /></Snap>
          <Snap><SmallS><path d="M21 6v14H6" fill="none" stroke="#888" strokeWidth="1.300" /><circle cx="10" cy="10" r="2.500" fill="#b8dcb8" stroke="#1c8a28" strokeWidth="1.400" /></SmallS></Snap>
          <Snap><SmallS><path d="M22 4v16H3" fill="none" stroke="#222" strokeWidth="1.400" strokeDasharray="2 1.500" /><path d="M10 5v9M5 10h10" stroke="#222" strokeWidth="1.400" /></SmallS></Snap>
          <Snap>
            <div className="flex flex-col items-center">
              <span className="font-['Liberation_Sans',sans-serif] text-[20px] font-bold leading-[17px] text-[#111]">A</span>
              <div className="flex items-center">
                <div className="h-[5px] w-[5px] rounded-full border border-[#1e8a26] bg-[#8ac08a]" />
                <div className="h-px w-[14px] bg-[#1e8a26]" />
              </div>
            </div>
          </Snap>
          <SnapSep h="h-[12px]" />
          <Snap><svg width="18" height="18" viewBox="0 0 18 18"><rect x="3" y="1.500" width="12" height="15" fill="#eee" stroke="#444" strokeWidth="1.200" /></svg></Snap>
          <Snap on><SmallS><path d="M2 5h20M2 10h20M2 15h20M2 20h20M5 2v20M10 2v20M15 2v20M20 2v20" stroke="#1616f0" strokeWidth="1.100" /></SmallS></Snap>
          <Snap on><SmallS><path d="M6 2v20M20 2v20M9 22L17 2" stroke="#1616f0" strokeWidth="1.300" /></SmallS></Snap>
        </div>
      </div>

      {/* colour palette */}
      <div className="flex h-[20px] shrink-0 items-center pl-[2px] pt-[2px]">
        <div className="flex h-[18px] border border-[#a6a6a6]">
          <svg width="16" height="16" viewBox="0 0 16 16" className="bg-white">
            <path d="M0 0l16 16M16 0L0 16" stroke="#8a1414" strokeWidth="1.400" />
          </svg>
          {palette.map((c, i) => (
            <div key={i} className="h-[16px] w-[16px]" style={{ backgroundColor: `#${c}` }} />
          ))}
        </div>
        <svg width="8" height="10" viewBox="0 0 8 10" className="ml-[4px]">
          <path d="M7 0v10L0 5z" fill="#555" />
        </svg>
      </div>
      <div className="flex h-[17px] shrink-0 items-center pl-[2px]">
        <div className="flex h-[16px] w-[1266px] items-center rounded-r-[2px] bg-linear-to-b from-[#e6e6e6] to-white pl-[1px]">
          <div className="h-[9px] w-[230px] rounded-full border border-[#8a8a8a] bg-[#cdcdcd]" />
        </div>
      </div>

      {/* status bar */}
      <div className="flex h-[29px] shrink-0 items-center pr-px">
        <div className="w-[72px] pl-[2px] text-[9px] leading-[15px] text-[#555]">
          <div>Fill:</div>
          <div>Stroke:</div>
        </div>
        <div className="w-[56px] text-[9px] leading-[15px] text-[#555]">
          <div>N/A</div>
          <div>N/A</div>
        </div>
        <span className="w-[13px] text-[10px] text-[#555]">O:</span>
        <div className="flex h-[22px] w-[46px] rounded-[3px] border border-[#a8a8a8] bg-[#d2d2d2]">
          <span className="w-[34px] pl-[4px] text-[10px] leading-[20px] text-[#a2a2a2]">0</span>
          <span className="flex flex-1 items-center justify-center border-l border-[#b4b4b4] bg-[#c6c6c6]"><UpDown /></span>
        </div>
        <div className="ml-[3px] h-[29px] w-px bg-[#b4b4b4]" />
        <div className="flex w-[26px] justify-center">
          <svg width="14" height="12" viewBox="0 0 14 12">
            <path d="M1 6c3-5 9-5 12 0-3 5-9 5-12 0z" fill="#ddd" stroke="#222" />
            <circle cx="7" cy="6" r="2.500" fill="#222" />
            <path d="M2 2l2 2M5 .5l1 3M9 .5l-1 3M12 2l-2 2" stroke="#222" />
          </svg>
        </div>
        <div className="flex w-[19px] justify-center pr-px">
          <svg width="12" height="14" viewBox="0 0 12 14">
            <path d="M3 6V3.500a2.800 2.800 0 0 1 5.600 0" fill="none" stroke="#333" strokeWidth="1.300" />
            <rect x="1.500" y="6.500" width="9" height="7" fill="#f0cc60" stroke="#333" />
          </svg>
        </div>
        <div className="ml-[2px] flex h-[24px] w-[76px] items-center justify-between rounded-[3px] border border-[#a8a8a8] bg-[#dadada] pl-[5px] pr-[3px] text-[11px] font-semibold text-[#444]">
          <span>•Layer 1</span>
          <UpDown c="#333" />
        </div>
        <span className="ml-[3px] whitespace-nowrap text-[11.860px] text-[#4c4c4c]">
          No objects selected. Click, Shift+click, Alt+scroll mouse on top of objects, or drag around objects to select.
        </span>
        <div className="ml-auto h-[29px] w-px bg-[#b4b4b4]" />
        <div className="ml-[1px] w-[63px] font-['DejaVu_Sans_Mono',monospace] text-[10px] leading-[14px] text-[#555]">
          <div className="flex"><span className="w-[18px] font-['Noto_Sans',sans-serif]">X:</span>168,96</div>
          <div className="flex"><span className="w-[18px] font-['Noto_Sans',sans-serif]">Y:</span>319,39</div>
        </div>
        <span className="w-[11px] text-[10px] text-[#555]">Z:</span>
        <div className="flex h-[22px] w-[54px] rounded-[3px] border border-[#a0a0a0] bg-white">
          <span className="w-[42px] pl-[6px] text-[10px] leading-[20px] text-[#4c4c4c]">70%</span>
          <span className="flex flex-1 items-center justify-center border-l border-[#b4b4b4] bg-[#d0d0d0]"><UpDown c="#333" /></span>
        </div>
      </div>
    </div>
  );
}
